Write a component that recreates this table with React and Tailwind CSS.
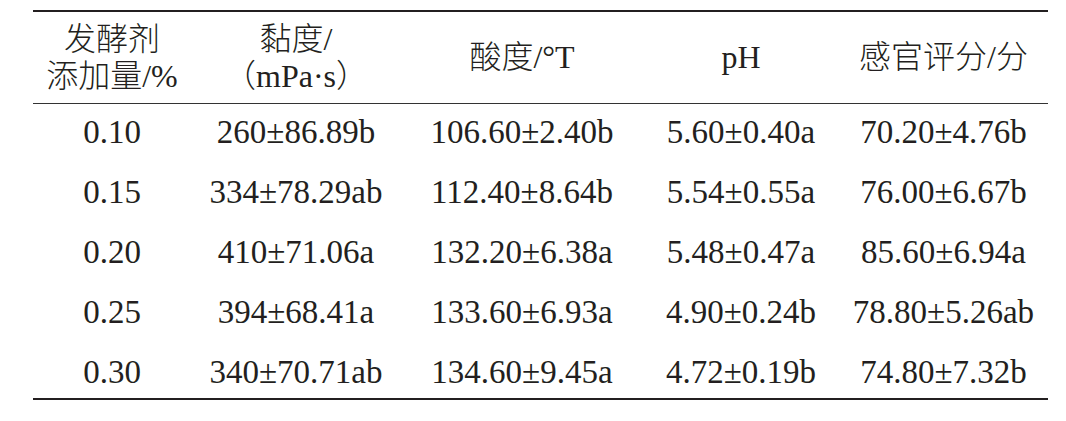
import React from "react";

const rows = [
    ["0.10", "260±86.89b", "106.60±2.40b", "5.60±0.40a", "70.20±4.76b"],
    ["0.15", "334±78.29ab", "112.40±8.64b", "5.54±0.55a", "76.00±6.67b"],
    ["0.20", "410±71.06a", "132.20±6.38a", "5.48±0.47a", "85.60±6.94a"],
    ["0.25", "394±68.41a", "133.60±6.93a", "4.90±0.24b", "78.80±5.26ab"],
    ["0.30", "340±70.71ab", "134.60±9.45a", "4.72±0.19b", "74.80±7.32b"],
];

const cols = "grid grid-cols-[158px_210px_242px_196px_209px]";

const App = () => {
    return (
        <div className="w-[1066px] h-[421px] bg-white pt-[10px] pl-[33px] text-[#231f20] text-[32px] font-[family-name:'Liberation_Serif','Noto_Sans_CJK_SC',serif]">
            <div className="w-[1015px] border-t-2 border-b-2 border-[#231f20]">
                <div className={`${cols} h-[92px] items-center text-center leading-[37px] border-b border-[#333]`}>
                    <div className="font-light">
                        <div>发酵剂</div>
                        <div>添加量/%</div>
                    </div>
                    <div className="font-light">
                        <div>黏度/</div>
                        <div>（mPa·s）</div>
                    </div>
                    <div className="font-light">酸度/°T</div>
                    <div>pH</div>
                    <div className="font-light">感官评分/分</div>
                </div>
                <div className="h-[294px] text-[33px]">
                    {rows.map((r) => (
                        <div key={r[0]} className={`${cols} h-[60px] pb-[2px] items-center text-center`}>
                            {r.map((c, i) => (
                                <div key={i}>{c}</div>
                            ))}
                        </div>
                    ))}
                </div>
            </div>
        </div>
    );
};

export default App;
